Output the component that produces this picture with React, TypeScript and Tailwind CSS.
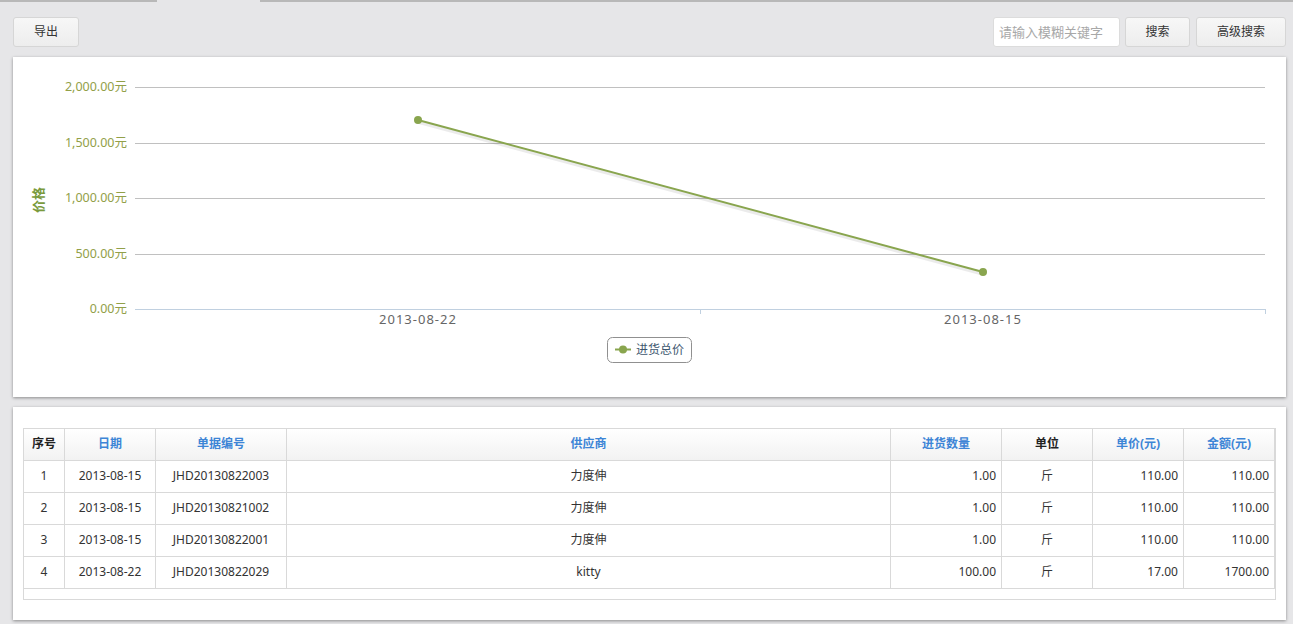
const font = { fontFamily: '"Noto Sans", "Noto Sans CJK SC", sans-serif' };

const rows = [
  { no: 1, date: "2013-08-15", code: "JHD20130822003", vendor: "力度伸", qty: "1.00", unit: "斤", price: "110.00", total: "110.00" },
  { no: 2, date: "2013-08-15", code: "JHD20130821002", vendor: "力度伸", qty: "1.00", unit: "斤", price: "110.00", total: "110.00" },
  { no: 3, date: "2013-08-15", code: "JHD20130822001", vendor: "力度伸", qty: "1.00", unit: "斤", price: "110.00", total: "110.00" },
  { no: 4, date: "2013-08-22", code: "JHD20130822029", vendor: "kitty", qty: "100.00", unit: "斤", price: "17.00", total: "1700.00" },
];

const headers = [
  { label: "序号", w: "w-[41px]", blue: false },
  { label: "日期", w: "w-[91px]", blue: true },
  { label: "单据编号", w: "w-[131px]", blue: true },
  { label: "供应商", w: "w-[604px]", blue: true },
  { label: "进货数量", w: "w-[111px]", blue: true },
  { label: "单位", w: "w-[91px]", blue: false },
  { label: "单价(元)", w: "w-[91px]", blue: true },
  { label: "金额(元)", w: "w-[91px]", blue: true },
];

function Chart() {
  const grid = [30, 86, 141, 197];
  const labels = ["2,000.00元", "1,500.00元", "1,000.00元", "500.00元", "0.00元"];
  const ys = [30, 86, 141, 197, 252];
  return (
    <svg width="1273" height="340" style={font}>
      {grid.map((y) => (
        <line key={y} x1="122" x2="1252" y1={y + 0.5} y2={y + 0.5} stroke="#c0c0c0" />
      ))}
      <line x1="122" x2="1252" y1="252.5" y2="252.5" stroke="#c0d0e0" />
      <line x1="687.5" x2="687.5" y1="252" y2="257" stroke="#c0d0e0" />
      <line x1="1252.5" x2="1252.5" y1="252" y2="257" stroke="#c0d0e0" />
      {labels.map((l, i) => (
        <text key={l} x="114" y={ys[i] + 4} textAnchor="end" fontSize="12.5" fill="#92a048">
          {l}
        </text>
      ))}
      <text
        x="30"
        y="143"
        transform="rotate(-90 30 143)"
        textAnchor="middle"
        fontSize="13"
        fontWeight="bold"
        fill="#7a9a3c"
      >
        价格
      </text>
      <text x="405" y="267" textAnchor="middle" fontSize="13" fill="#666" letterSpacing="1">
        2013-08-22
      </text>
      <text x="970" y="267" textAnchor="middle" fontSize="13" fill="#666" letterSpacing="1">
        2013-08-15
      </text>
      {/* series */}
      <polyline points="406,65 971,217" fill="none" stroke="rgba(0,0,0,0.08)" strokeWidth="4" />
      <polyline points="405,63 970,215" fill="none" stroke="#89a54e" strokeWidth="2" />
      <circle cx="405" cy="63" r="4" fill="#89a54e" />
      <circle cx="970" cy="215" r="4" fill="#89a54e" />
      {/* legend */}
      <rect x="594.5" y="280.5" width="84" height="25" rx="5" fill="#fff" stroke="#909090" />
      <line x1="602" x2="618" y1="292.5" y2="292.5" stroke="#89a54e" strokeWidth="2" />
      <circle cx="610" cy="292.5" r="4" fill="#89a54e" />
      <text x="623" y="297" fontSize="12" fill="#3e576f">
        进货总价
      </text>
    </svg>
  );
}

function Btn({ children, w }: { children: string; w: string }) {
  return (
    <button
      className={`${w} h-[30px] rounded-[3px] border border-[#d6d6d6] bg-gradient-to-b from-[#f7f7f7] to-[#ededed] text-[12px] text-[#333]`}
    >
      {children}
    </button>
  );
}

export default function App() {
  return (
    <div className="w-[1293px] h-[624px] overflow-hidden bg-[#e6e6e8]" style={font}>
      <div className="flex h-[2px]">
        <div className="w-[157px] bg-[#b8b8b8]"></div>
        <div className="w-[103px]"></div>
        <div className="flex-1 bg-[#b8b8b8]"></div>
      </div>
      <div className="pl-[13px] pr-[7px]">
        <div className="mt-[15px] flex items-center">
          <Btn w="w-[66px]">导出</Btn>
          <div className="flex-1"></div>
          <input
            className="w-[127px] h-[30px] rounded-[3px] border border-[#dcdcdc] bg-white px-[5px] text-[13px] text-[#333] placeholder:text-[#a8a8a8] outline-none"
            placeholder="请输入模糊关键字"
          />
          <div className="ml-[5px]">
            <Btn w="w-[65px]">搜索</Btn>
          </div>
          <div className="ml-[6px]">
            <Btn w="w-[90px]">高级搜索</Btn>
          </div>
        </div>

        <div className="mt-[10px] h-[340px] bg-white shadow-[0_1px_3px_rgba(0,0,0,0.4)]">
          <Chart />
        </div>

        <div className="mt-[10px] h-[213px] bg-white shadow-[0_1px_3px_rgba(0,0,0,0.4)] pt-[21px] pl-[10px]">
          <div className="w-[1253px] border-r border-b border-t border-[#d9d9d9] pb-[10px]">
            <table className="table-fixed border-collapse w-[1252px] text-[12px] text-[#333]">
              <thead>
                <tr className="h-[31px] bg-gradient-to-b from-white to-[#f2f2f2]">
                  {headers.map((h, i) => (
                    <th
                      key={h.label}
                      className={`${h.w} border-b border-r border-[#d9d9d9] ${i === 0 ? "border-l" : ""} font-bold ${
                        h.blue ? "text-[#3d85d6]" : "text-[#222]"
                      }`}
                    >
                      {h.label}
                    </th>
                  ))}
                </tr>
              </thead>
              <tbody>
                {rows.map((r) => (
                  <tr key={r.no} className="h-[32px]">
                    <td className="border-l border-r border-b border-[#d9d9d9] text-center">{r.no}</td>
                    <td className="border-r border-b border-[#d9d9d9] text-center">{r.date}</td>
                    <td className="border-r border-b border-[#d9d9d9] text-center">{r.code}</td>
                    <td className="border-r border-b border-[#d9d9d9] text-center">{r.vendor}</td>
                    <td className="border-r border-b border-[#d9d9d9] text-right pr-[5px]">{r.qty}</td>
                    <td className="border-r border-b border-[#d9d9d9] text-center">{r.unit}</td>
                    <td className="border-r border-b border-[#d9d9d9] text-right pr-[5px]">{r.price}</td>
                    <td className="border-r border-b border-[#d9d9d9] text-right pr-[5px]">{r.total}</td>
                  </tr>
                ))}
              </tbody>
            </table>
            <div className="h-[10px] -mb-[10px] border-l border-[#d9d9d9]"></div>
          </div>
        </div>
      </div>
    </div>
  );
}
